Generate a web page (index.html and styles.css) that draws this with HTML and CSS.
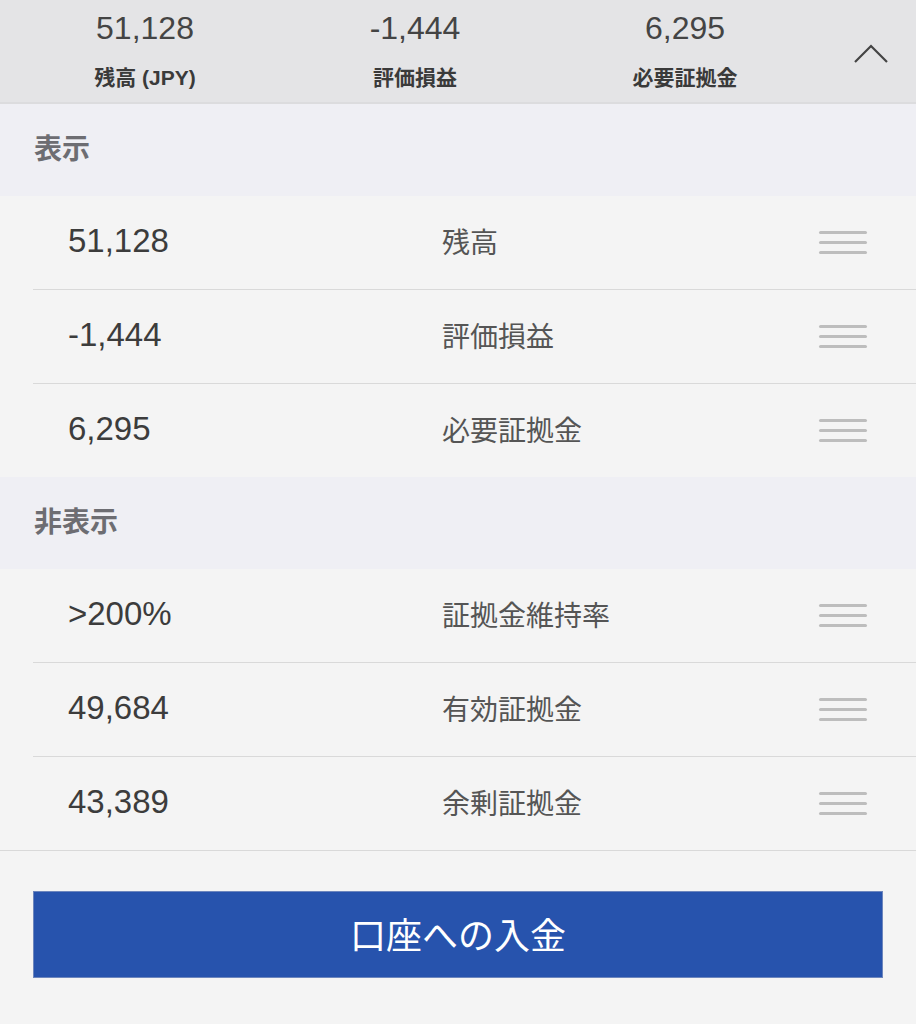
FILE: index.html
```html
<!DOCTYPE html>
<html lang="ja">
<head>
<meta charset="UTF-8">
<meta name="viewport" content="width=device-width, initial-scale=1.0">
<title>表示設定</title>
<link rel="stylesheet" href="styles.css">
</head>
<body>
<header class="summary">
    <div class="summary-item">
        <div class="summary-value">51,128</div>
        <div class="summary-label">残高 (JPY)</div>
    </div>
    <div class="summary-item">
        <div class="summary-value">-1,444</div>
        <div class="summary-label">評価損益</div>
    </div>
    <div class="summary-item">
        <div class="summary-value">6,295</div>
        <div class="summary-label">必要証拠金</div>
    </div>
    <div class="summary-toggle">
        <svg width="36" height="20" viewBox="0 0 36 20">
            <polyline points="2,18 18,2 34,18" fill="none" stroke="#444" stroke-width="2.2"/>
        </svg>
    </div>
</header>

<div class="section-title">表示</div>
<ul class="list">
    <li class="row"><span class="row-value">51,128</span><span class="row-label">残高</span><span class="handle"><i></i><i></i><i></i></span></li>
    <li class="row"><span class="row-value">-1,444</span><span class="row-label">評価損益</span><span class="handle"><i></i><i></i><i></i></span></li>
    <li class="row"><span class="row-value">6,295</span><span class="row-label">必要証拠金</span><span class="handle"><i></i><i></i><i></i></span></li>
</ul>

<div class="section-title">非表示</div>
<ul class="list list-last">
    <li class="row"><span class="row-value">&gt;200%</span><span class="row-label">証拠金維持率</span><span class="handle"><i></i><i></i><i></i></span></li>
    <li class="row"><span class="row-value">49,684</span><span class="row-label">有効証拠金</span><span class="handle"><i></i><i></i><i></i></span></li>
    <li class="row"><span class="row-value">43,389</span><span class="row-label">余剰証拠金</span><span class="handle"><i></i><i></i><i></i></span></li>
</ul>

<div class="actions">
    <button type="button" class="deposit">口座への入金</button>
</div>
</body>
</html>
```

FILE: styles.css
```css
body {
    margin: 0;
    background-color: #f4f4f4;
    font-family: "Liberation Sans", "Noto Sans CJK JP", sans-serif;
    color: #444;
}
.summary {
    display: flex;
    height: 102px;
    padding-left: 10px;
    background-color: #e4e4e6;
    border-bottom: 2px solid #dcdcde;
}
.summary-item {
    width: 270px;
    text-align: center;
}
.summary-value {
    margin-top: 10px;
    font-size: 32px;
    line-height: 36px;
    color: #444;
}
.summary-label {
    margin-top: 20px;
    font-size: 21px;
    line-height: 24px;
    font-weight: bold;
    color: #3a3a3a;
}
.summary-toggle {
    flex: 1;
    display: flex;
    justify-content: center;
    padding-top: 44px;
    padding-left: 6px;
}
.section-title {
    height: 92px;
    padding-left: 34px;
    padding-bottom: 6px;
    box-sizing: border-box;
    display: flex;
    align-items: center;
    background-color: #efeff4;
    font-family: "Noto Sans CJK JP", sans-serif;
    font-size: 28px;
    font-weight: bold;
    color: #6d6d72;
}
.list {
    list-style: none;
    margin: 0;
    padding: 0;
}
.row {
    display: flex;
    align-items: center;
    height: 93px;
    margin-left: 33px;
    padding-left: 35px;
    padding-right: 49px;
    padding-bottom: 3px;
    box-sizing: border-box;
    border-bottom: 1px solid #d9d9d9;
}
.list .row:last-child {
    height: 93px;
    border-bottom: none;
}
.list .row:not(:last-child) {
    height: 94px;
}
.list-last {
    border-bottom: 1px solid #d9d9d9;
}
.list-last .row:last-child {
    margin-left: 0;
    padding-left: 68px;
}
.row-value {
    width: 374px;
    font-size: 33px;
    color: #3c3c3c;
}
.row-label {
    flex: 1;
    font-family: "Noto Sans CJK JP", sans-serif;
    font-size: 28px;
    color: #555;
}
.handle {
    display: flex;
    flex-direction: column;
    gap: 7px;
    width: 48px;
    margin-top: 3px;
}
.handle i {
    display: block;
    height: 3px;
    border-radius: 2px;
    background-color: #bdbdbd;
}
.actions {
    padding: 40px 33px 42px;
}
.deposit {
    display: block;
    width: 100%;
    height: 87px;
    padding-bottom: 4px;
    background-color: #2753ad;
    border: 1px solid #6d86bd;
    color: #fff;
    font-family: "Noto Sans CJK JP", sans-serif;
    font-size: 36px;
    cursor: pointer;
}
```
